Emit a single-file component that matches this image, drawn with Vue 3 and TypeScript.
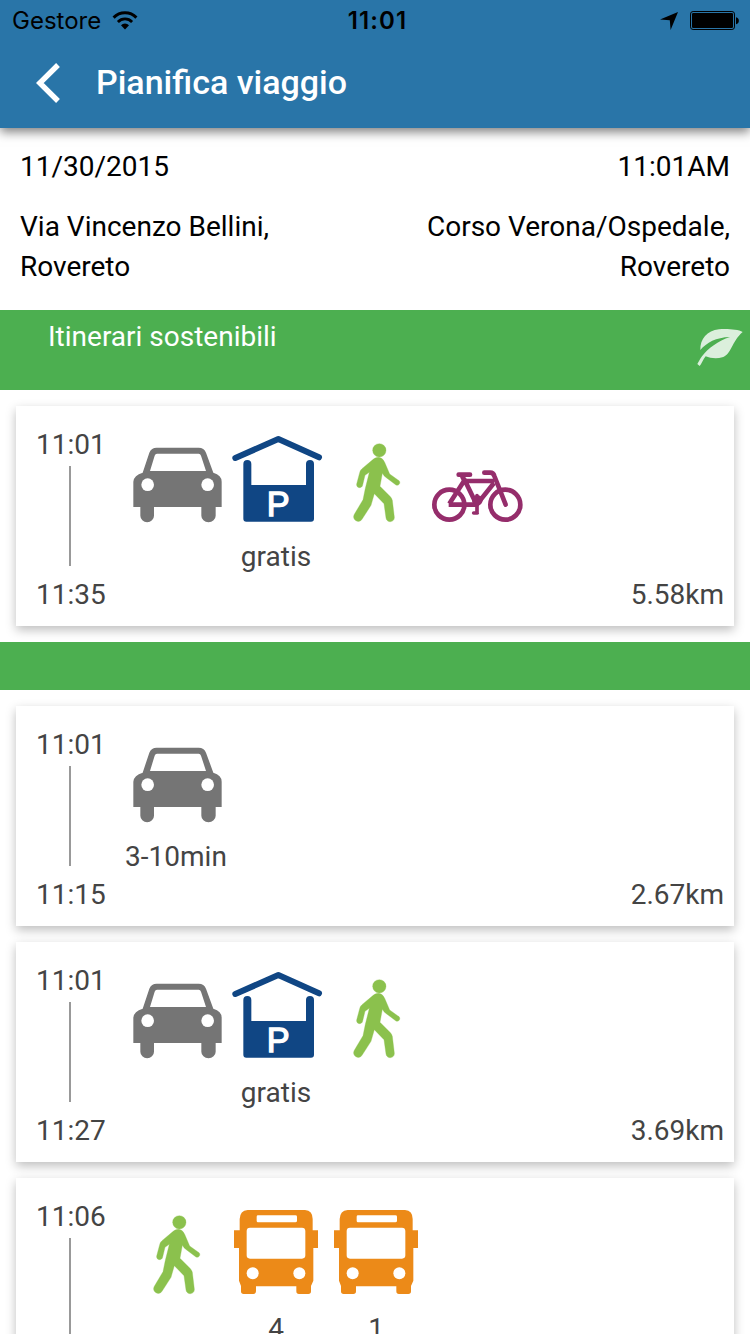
<script setup lang="ts">
type Mode = 'car' | 'parking' | 'walk' | 'bike' | 'bus'

interface Leg {
  mode: Mode
  label?: string
}

interface Itinerary {
  start: string
  end?: string
  distance?: string
  legs: Leg[]
}

const sustainable: Itinerary[] = [
  {
    start: '11:01',
    end: '11:35',
    distance: '5.58km',
    legs: [{ mode: 'car' }, { mode: 'parking', label: 'gratis' }, { mode: 'walk' }, { mode: 'bike' }],
  },
]

const others: Itinerary[] = [
  { start: '11:01', end: '11:15', distance: '2.67km', legs: [{ mode: 'car', label: '3-10min' }] },
  {
    start: '11:01',
    end: '11:27',
    distance: '3.69km',
    legs: [{ mode: 'car' }, { mode: 'parking', label: 'gratis' }, { mode: 'walk' }],
  },
  {
    start: '11:06',
    legs: [{ mode: 'walk' }, { mode: 'bus', label: '4' }, { mode: 'bus', label: '1' }],
  },
]

const groups = [
  { title: 'Itinerari sostenibili', items: sustainable },
  { title: '', items: others },
]

const viewBoxes: Record<Mode, string> = {
  car: '18 15 300 300',
  parking: '318 15 300 300',
  walk: '-12 15 300 300',
  bike: '288 15 300 300',
  bus: '258 36 300 300',
}
</script>

<template>
  <div class="screen">
    <header class="top">
      <div class="status">
        <div class="carrier">
          <span>Gestore</span>
          <svg class="wifi" viewBox="0 0 26 20">
            <path d="M1.6 6.6a16 16 0 0 1 22.8 0" fill="none" stroke="#000" stroke-width="3" />
            <path d="M5.9 10.9a10 10 0 0 1 14.2 0" fill="none" stroke="#000" stroke-width="2.8" />
            <path d="M9 14.2a5.7 5.7 0 0 1 8 0L13 18.4z" />
          </svg>
        </div>
        <span class="clock">11:01</span>
        <div class="indicators">
          <svg class="locate" viewBox="0 0 18 18"><path d="M18 0L10.6 18L9.8 8.2L0 7.4z" /></svg>
          <svg class="battery" viewBox="0 0 50 20">
            <rect x="0.5" y="0.5" width="44" height="18" rx="2.6" fill="none" stroke="#000" stroke-width="1" />
            <rect x="2" y="2" width="41" height="15" rx="1.2" />
            <path d="M46 6.2c3.8.5 3.8 6.600 0 7z" />
          </svg>
        </div>
      </div>
      <div class="nav">
        <svg class="back" viewBox="0 0 26 40">
          <path d="M22 2L3.800 20L22 38" fill="none" stroke="#fff" stroke-width="5.400" />
        </svg>
        <h1>Pianifica viaggio</h1>
      </div>
    </header>

    <section class="summary">
      <div class="row when"><span>11/30/2015</span><span>11:01AM</span></div>
      <div class="row">
        <span>Via Vincenzo Bellini,<br />Rovereto</span>
        <span class="to">Corso Verona/Ospedale,<br />Rovereto</span>
      </div>
    </section>

    <section v-for="(group, g) in groups" :key="g">
      <div class="band" :class="{ titled: group.title }">
        <span>{{ group.title }}</span>
        <svg v-if="group.title" class="leaf" viewBox="291 84 138 117">
          <path
            d="M428 96C414 88 380 86 357 88C321 92 300 117 301 150C320 128 348 112 390 111C355 122 323 146 306 169C299 179 295 187 292 192L299 198C305 191 309 179 317 169C331 175 351 177 367 172C395 163 395 124 428 96Z"
          />
        </svg>
      </div>
      <div class="list">
        <article v-for="(trip, i) in group.items" :key="i" class="card">
          <div class="times">
            <span>{{ trip.start }}</span>
            <i class="line"></i>
            <span v-if="trip.end">{{ trip.end }}</span>
          </div>
          <div class="legs">
            <div v-for="(leg, l) in trip.legs" :key="l" class="leg">
              <svg class="mode" :viewBox="viewBoxes[leg.mode]">
                <g v-if="leg.mode === 'car'" fill="#757575">
                  <path
                    fill-rule="evenodd"
                    d="M110 68H236Q252 68 258 83L280 143Q305 150 305 170V246H287V272A21 19 0 0 1 244 272V246H102V272A20 19 0 0 1 61 272V246H40V170Q42 150 68 143L88 83Q94 68 110 68ZM111 86Q106 86 104 92L90 138H258L243 92Q241 86 236 86Z"
                  />
                  <circle cx="83" cy="179" r="19" fill="#fff" />
                  <circle cx="263" cy="179" r="19" fill="#fff" />
                </g>
                <g v-else-if="leg.mode === 'parking'" fill="#104684">
                  <path
                    d="M346 99L475 42L597 97"
                    fill="none"
                    stroke="#104684"
                    stroke-width="18"
                    stroke-linecap="round"
                    stroke-linejoin="round"
                  />
                  <path d="M370 117Q370 105 382 105Q394 105 394 117V180H558V117Q558 105 570 105Q582 105 582 117V281Q582 290 573 290H379Q370 290 370 281Z" />
                  <text x="440" y="274" class="p">P</text>
                </g>
                <g v-else-if="leg.mode === 'walk'" fill="#8bc14d" stroke="#8bc14d" stroke-width="1">
                  <circle cx="148" cy="76" r="20" />
                  <path
                    d="M146 97C138 97 132 101 126 106L96 131Q90 136 89 143L80 177C78 190 96 192 98 180L105 151L118 142L106 190L99 224L73 268C64 284 86 298 96 283L123 241L133 206L162 236L168 279C171 296 195 292 193 276L187 226Q185 219 180 214L150 184L157 145Q161 153 169 158L198 180C209 184 214 169 204 165L179 147L164 112Q158 98 146 97Z"
                  />
                </g>
                <g v-else-if="leg.mode === 'bike'" fill="none" stroke="#952d6b" stroke-width="14" stroke-linejoin="round">
                  <circle cx="358" cy="239" r="45" />
                  <circle cx="526" cy="239" r="45" />
                  <path d="M356 239H440L492 174M440 239L404 165L358 236M403 168H492" />
                  <path d="M397 155L405 170M386 149H420M463 143H481Q490 143 493 153L527 239" stroke-linecap="round" />
                  <path d="M441 212V264M431 264H442" stroke-width="11" stroke-linecap="round" />
                  <circle cx="442" cy="226" r="16" fill="#952d6b" stroke="none" />
                </g>
                <g v-else fill="#ec8a18">
                  <path
                    fill-rule="evenodd"
                    d="M323 60H495Q518 62 518 87V121H534V174H520V272L513 288V304Q513 312 505 312H477Q469 312 469 304V289H348V304Q348 312 340 312H311Q303 312 303 304V288L297 272V174H282V121H299V87Q300 62 323 60ZM354 76Q350 76 350 80V92Q350 97 354 97H466Q471 97 471 92V80Q471 76 466 76ZM330 113Q320 113 320 123V196Q320 206 330 206H486Q496 206 496 196V123Q496 113 486 113Z"
                  />
                  <circle cx="338" cy="250" r="18" fill="#fff" />
                  <circle cx="478" cy="250" r="18" fill="#fff" />
                </g>
              </svg>
              <span class="label">{{ leg.label }}</span>
            </div>
          </div>
          <span v-if="trip.distance" class="distance">{{ trip.distance }}</span>
        </article>
      </div>
    </section>
  </div>
</template>

<style>
html,
body {
  margin: 0;
  overflow: hidden;
}
</style>

<style scoped>
.screen {
  width: 750px;
  height: 1334px;
  overflow: hidden;
  background: #fff;
  font-family: Roboto, 'Liberation Sans', sans-serif;
  font-size: 28px;
  line-height: 40px;
  color: #000;
}
.top {
  position: relative;
  height: 128px;
  background: #2975a8;
  box-shadow: 0 4px 10px rgba(0, 0, 0, 0.5);
}
.status {
  display: grid;
  grid-template-columns: 1fr auto 1fr;
  align-items: center;
  height: 40px;
  padding: 1px 10px 0 12px;
  font-family: Inter, sans-serif;
  font-size: 24px;
}
.carrier {
  display: flex;
  align-items: center;
  gap: 11px;
}
.wifi {
  width: 26px;
  height: 20px;
}
.clock {
  padding-left: 3px;
  font-weight: 600;
  letter-spacing: 1.1px;
}
.indicators {
  display: flex;
  justify-content: flex-end;
  align-items: center;
  gap: 12px;
}
.locate {
  width: 18px;
  height: 18px;
}
.battery {
  width: 50px;
  height: 20px;
}
.nav {
  display: flex;
  align-items: center;
  height: 82px;
  padding-left: 36px;
}
.back {
  width: 26px;
  height: 40px;
  margin: 2px 34px 0 0;
}
h1 {
  margin: 0;
  color: #fff;
  font-size: 34px;
  font-weight: 500;
}
.summary {
  height: 163px;
  padding: 19px 20px 0;
}
.row {
  display: flex;
  justify-content: space-between;
}
.when {
  margin-bottom: 20px;
}
.to {
  text-align: right;
}
.band {
  display: flex;
  justify-content: space-between;
  height: 48px;
  background: #4caf50;
  color: #fff;
}
.band.titled {
  height: 73px;
  padding: 7px 7px 0 48px;
}
.leaf {
  width: 46px;
  height: 39px;
  margin-top: 11px;
  fill: rgba(255, 255, 255, 0.8);
}
.list {
  display: flex;
  flex-direction: column;
  gap: 16px;
  padding: 16px;
}
.card {
  display: flex;
  box-sizing: border-box;
  height: 220px;
  padding: 19px 10px 0 20px;
  background: #fff;
  color: #444;
  box-shadow: 0 4px 10px rgba(0, 0, 0, 0.26);
}
.times {
  display: flex;
  flex-direction: column;
  width: 90px;
}
.line {
  width: 2px;
  height: 100px;
  margin: 1px 0 9px 33px;
  background: #999;
}
.legs {
  display: flex;
  flex: 1;
}
.leg {
  display: flex;
  flex-direction: column;
  align-items: center;
  width: 100px;
}
.mode {
  width: 100px;
  height: 100px;
  margin-top: 5px;
  flex: none;
}
.label {
  margin-top: 7px;
  white-space: nowrap;
}
.p {
  fill: #fff;
  stroke: #fff;
  stroke-width: 4px;
  font: 103px 'Liberation Sans', sans-serif;
}
.distance {
  margin-top: 150px;
}
</style>
